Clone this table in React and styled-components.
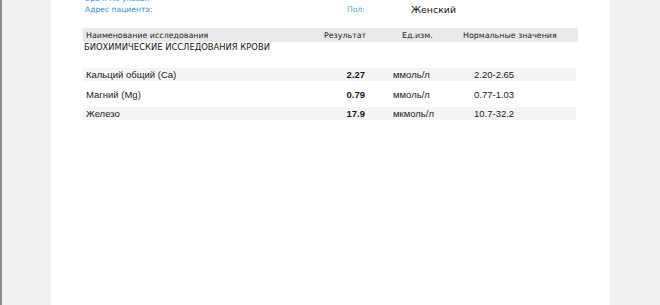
import React from "react";
import styled, { createGlobalStyle } from "styled-components";

const GlobalStyle = createGlobalStyle`
  html, body {
    margin: 0;
    padding: 0;
    height: 100%;
  }
  body {
    background: #f0f1f3;
    border-left: 2px solid #8c8c8c;
    box-sizing: border-box;
    overflow: hidden;
  }
`;

const Sheet = styled.div`
  margin-left: 49px;
  width: 559px;
  height: 305px;
  background: #ffffff;
  padding: 0 32px;
  box-sizing: border-box;
  overflow: hidden;
`;

const Info = styled.div`
  margin-top: -7px;
  display: flex;
  flex-direction: column;
`;

const InfoRow = styled.div`
  display: grid;
  grid-template-columns: 262px 64px 1fr;
  height: 10px;
  align-items: center;
  margin-bottom: 1px;
  padding-left: 2px;
`;

const Label = styled.span`
  font-family: "DejaVu Sans", Verdana, sans-serif;
  font-size: 7.6px;
  color: ${(p) => (p.light ? "#4fa6cf" : "#3293c8")};
  white-space: nowrap;
`;

const Value = styled.span`
  font-family: "DejaVu Sans", Verdana, sans-serif;
  font-size: 9.4px;
  color: #111;
  white-space: nowrap;
`;

const Head = styled.div`
  margin-top: 13px;
  width: 495px;
  height: 14px;
  background: #e9e9ea;
  display: grid;
  grid-template-columns: 238px 78px 61px 1fr;
  align-items: center;
  padding-left: 3px;
  box-sizing: border-box;
`;

const HeadCell = styled.span`
  font-family: "DejaVu Sans", Verdana, sans-serif;
  font-size: 7.9px;
  color: #222;
  white-space: nowrap;
`;

const Section = styled.div`
  font-family: "DejaVu Sans", Verdana, sans-serif;
  font-size: 8.4px;
  color: #111;
  height: 11px;
  line-height: 11px;
  margin-left: 1px;
  white-space: nowrap;
`;

const Rows = styled.div`
  margin-top: 15px;
  display: flex;
  flex-direction: column;
  gap: 6.5px;
`;

const Row = styled.div`
  width: 493px;
  height: 13px;
  background: ${(p) => (p.shaded ? "#f4f4f5" : "transparent")};
  display: grid;
  grid-template-columns: 249px 30px 109px 1fr;
  align-items: center;
  padding-left: 3px;
  box-sizing: border-box;
  font-family: "Liberation Sans", Arial, sans-serif;
  font-size: 9.5px;
  color: #1a1a1a;
`;

const Cell = styled.span`
  white-space: nowrap;
  text-align: ${(p) => (p.right ? "right" : "left")};
  font-weight: ${(p) => (p.bold ? 700 : 400)};
  padding-left: ${(p) => p.pad || 0}px;
`;

const results = [
  { name: "Кальций общий (Ca)", value: "2.27", unit: "ммоль/л", norm: "2.20-2.65" },
  { name: "Магний (Mg)", value: "0.79", unit: "ммоль/л", norm: "0.77-1.03" },
  { name: "Железо", value: "17.9", unit: "мкмоль/л", norm: "10.7-32.2" },
];

export default function App() {
  return (
    <>
      <GlobalStyle />
      <Sheet>
        <Info>
          <InfoRow>
            <Label>Врач: Не указан</Label>
          </InfoRow>
          <InfoRow>
            <Label>Адрес пациента:</Label>
            <Label light>Пол:</Label>
            <Value>Женский</Value>
          </InfoRow>
        </Info>
        <Head>
          <HeadCell>Наименование исследования</HeadCell>
          <HeadCell>Результат</HeadCell>
          <HeadCell>Ед.изм.</HeadCell>
          <HeadCell>Нормальные значения</HeadCell>
        </Head>
        <Section>БИОХИМИЧЕСКИЕ ИССЛЕДОВАНИЯ КРОВИ</Section>
        <Rows>
          {results.map((r, i) => (
            <Row key={r.name} shaded={i % 2 === 0}>
              <Cell>{r.name}</Cell>
              <Cell right bold>{r.value}</Cell>
              <Cell pad={28}>{r.unit}</Cell>
              <Cell>{r.norm}</Cell>
            </Row>
          ))}
        </Rows>
      </Sheet>
    </>
  );
}
